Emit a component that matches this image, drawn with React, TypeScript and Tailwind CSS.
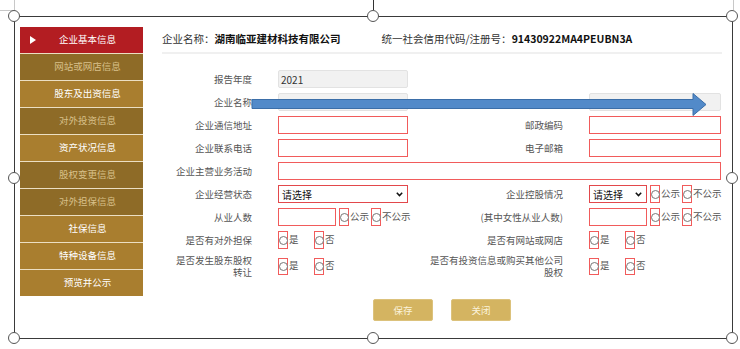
import React from "react";

const FONT = '"Noto Sans CJK SC", "Liberation Sans", sans-serif';

type NavItem = { label: string; tone: "active" | "dark" | "light" };

const navItems: NavItem[] = [
  { label: "企业基本信息", tone: "active" },
  { label: "网站或网店信息", tone: "dark" },
  { label: "股东及出资信息", tone: "light" },
  { label: "对外投资信息", tone: "dark" },
  { label: "资产状况信息", tone: "light" },
  { label: "股权变更信息", tone: "dark" },
  { label: "对外担保信息", tone: "dark" },
  { label: "社保信息", tone: "light" },
  { label: "特种设备信息", tone: "light" },
  { label: "预览并公示", tone: "light" },
];

function Sidebar() {
  return (
    <nav className="w-[123px] flex flex-col gap-[1px] bg-[#ecdfc3] self-start">
      {navItems.map((item) => (
        <div
          key={item.label}
          className={
            "relative h-[26px] flex items-center justify-center pl-[12px] text-[9.5px] leading-none " +
            (item.tone === "active"
              ? "bg-[#b31d22] text-white"
              : item.tone === "dark"
              ? "bg-[#8e6b27] text-[#d8c08a]"
              : "bg-[#a97e2f] text-white")
          }
        >
          {item.tone === "active" && (
            <svg className="absolute left-[10px] top-[9px]" width="6" height="8" viewBox="0 0 6 8">
              <polygon points="0,0 6,4 0,8" fill="#fff" />
            </svg>
          )}
          {item.label}
        </div>
      ))}
    </nav>
  );
}

function Label({ children }: { children: React.ReactNode }) {
  return (
    <div className="flex items-center justify-end text-right text-[9.5px] leading-[12px] text-[#555] whitespace-nowrap">
      {children}
    </div>
  );
}

function GrayInput({ value, className = "" }: { value?: string; className?: string }) {
  return (
    <div
      className={
        "h-[18px] rounded-[2px] border border-[#e2e2e2] bg-[#f1f1f1] px-[2px] flex items-center text-[10px] text-[#333] " +
        className
      }
    >
      {value}
    </div>
  );
}

function RedInput({ className = "" }: { className?: string }) {
  return <div className={"h-[18px] border border-[#f15b5b] bg-white " + className} />;
}

function Select({ className = "" }: { className?: string }) {
  return (
    <div
      className={
        "h-[18px] border border-[#e2484b] bg-white flex items-center justify-between pl-[3px] pr-[4px] text-[10px] text-[#111] whitespace-nowrap " +
        className
      }
    >
      <span>请选择</span>
      <svg width="7" height="5" viewBox="0 0 7 5">
        <polyline points="0.8,0.8 3.5,3.6 6.2,0.8" fill="none" stroke="#111" strokeWidth="1.5" />
      </svg>
    </div>
  );
}

function Radio({ text, h = "h-[18px]" }: { text: string; h?: string }) {
  return (
    <div className="flex items-center shrink-0 whitespace-nowrap text-[9.5px] text-[#555] leading-none">
      <div className={"w-[10px] shrink-0 border border-[#f15b5b] flex items-center justify-center " + h}>
        <div className="w-[9px] h-[9px] shrink-0 rounded-full border border-[#777] bg-white" />
      </div>
      <span className="ml-[1px]">{text}</span>
    </div>
  );
}

function YesNo({ h }: { h?: string }) {
  return (
    <div className="flex items-center">
      <div className="w-[36px] shrink-0">
        <Radio text="是" h={h} />
      </div>
      <Radio text="否" h={h} />
    </div>
  );
}

function PublicRadios() {
  return (
    <div className="flex items-center shrink-0 gap-[2px] ml-[3px]">
      <Radio text="公示" />
      <Radio text="不公示" />
    </div>
  );
}

function TwoLineLabel({ first, second }: { first: string; second: string }) {
  return (
    <div className="flex items-center justify-end">
      <p className="text-right text-[9.5px] leading-[12px] text-[#555] whitespace-nowrap">
        {first}
        <br />
        {second}
      </p>
    </div>
  );
}

function Form() {
  return (
    <div className="mt-[16px] grid grid-cols-[90px_130px_129px_132px] grid-rows-[repeat(8,18px)_24px] gap-x-[26px] gap-y-[5px]">
      <Label>报告年度</Label>
      <GrayInput value="2021" />
      <div />
      <div />

      <Label>企业名称</Label>
      <GrayInput />
      <div />
      <GrayInput />

      <Label>企业通信地址</Label>
      <RedInput />
      <Label>邮政编码</Label>
      <RedInput />

      <Label>企业联系电话</Label>
      <RedInput />
      <Label>电子邮箱</Label>
      <RedInput />

      <Label>企业主营业务活动</Label>
      <RedInput className="col-span-3" />

      <Label>企业经营状态</Label>
      <Select />
      <Label>企业控股情况</Label>
      <div className="flex items-center">
        <Select className="w-[58px] shrink-0" />
        <PublicRadios />
      </div>

      <Label>从业人数</Label>
      <div className="flex items-center">
        <RedInput className="w-[58px] shrink-0" />
        <PublicRadios />
      </div>
      <Label>(其中女性从业人数)</Label>
      <div className="flex items-center">
        <RedInput className="w-[58px] shrink-0" />
        <PublicRadios />
      </div>

      <Label>是否有对外担保</Label>
      <YesNo />
      <Label>是否有网站或网店</Label>
      <YesNo />

      <TwoLineLabel first="是否发生股东股权" second="转让" />
      <div className="flex items-center">
        <YesNo h="h-[17px]" />
      </div>
      <TwoLineLabel first="是否有投资信息或购买其他公司" second="股权" />
      <div className="flex items-center">
        <YesNo h="h-[17px]" />
      </div>
    </div>
  );
}

function Handle({ pos }: { pos: string }) {
  return (
    <div className={"absolute w-[12px] h-[12px] rounded-full border border-[#555] bg-white " + pos} />
  );
}

export default function App() {
  return (
    <div className="relative w-[740px] h-[349px] bg-white overflow-hidden" style={{ fontFamily: FONT }}>
      {/* page corner marks + rotate line */}
      <div className="absolute left-[14px] top-0 w-px h-[10px] bg-[#c8c8c8]" />
      <div className="absolute left-0 top-[10px] w-[14px] h-px bg-[#c8c8c8]" />
      <div className="absolute left-[733px] top-0 w-px h-[10px] bg-[#c8c8c8]" />
      <div className="absolute left-[373px] top-0 w-px h-[10px] bg-[#333]" />

      <div className="ml-[14px] mt-[16px] w-[719px] h-[323px] border border-[#3a3a3a] pl-[5px] pt-[10px]">
        <div className="flex">
          <Sidebar />
          <div className="ml-[19px] w-[560px]">
            <div className="h-[27px] flex items-center border-b-2 border-[#f0f0f0] text-[10.5px] leading-none whitespace-nowrap">
              <span className="text-[#333]">企业名称：</span>
              <span className="font-bold text-[#111]">湖南临亚建材科技有限公司</span>
              <span className="ml-[41px] text-[#333]">统一社会信用代码/注册号：</span>
              <span className="font-bold text-[#111]">91430922MA4PEUBN3A</span>
            </div>
            <Form />
            <div className="mt-[21px] flex justify-center gap-[18px]">
              <button className="w-[60px] h-[22px] rounded-[2px] bg-[#d4b461] border border-[#dcc27c] text-[9.5px] text-[#fbf3dc]">
                保存
              </button>
              <button className="w-[60px] h-[22px] rounded-[2px] bg-[#d4b461] border border-[#dcc27c] text-[9.5px] text-[#fbf3dc]">
                关闭
              </button>
            </div>
          </div>
        </div>
      </div>

      {/* blue arrow drawn over the form */}
      <svg className="absolute left-[250px] top-[92px]" width="462" height="26" viewBox="0 0 462 26">
        <polygon
          points="2,7.5 443,7.5 443,1.5 456,12.5 443,23.5 443,16.5 2,16.5"
          fill="#528ac9"
          stroke="#3b6ea8"
          strokeWidth="1"
        />
      </svg>

      <Handle pos="left-[8px] top-[10px]" />
      <Handle pos="left-[367px] top-[10px]" />
      <Handle pos="left-[726px] top-[10px]" />
      <Handle pos="left-[8px] top-[172px]" />
      <Handle pos="left-[726px] top-[172px]" />
      <Handle pos="left-[8px] top-[332px]" />
      <Handle pos="left-[367px] top-[332px]" />
      <Handle pos="left-[726px] top-[332px]" />
    </div>
  );
}
